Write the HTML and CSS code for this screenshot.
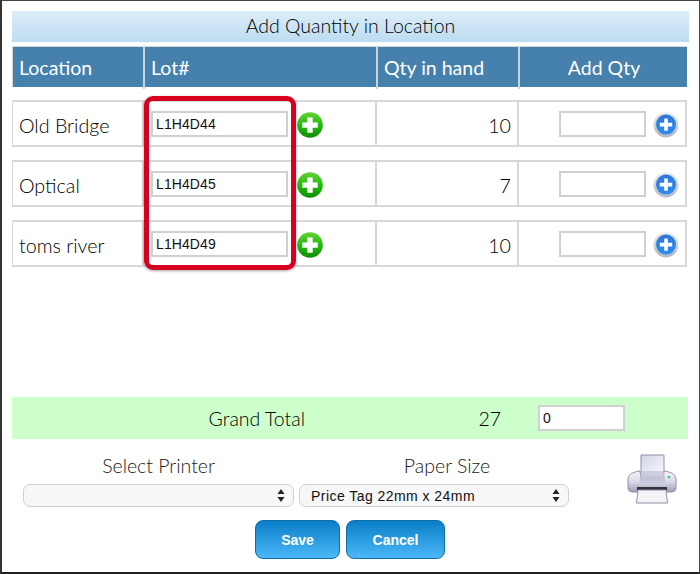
FILE: index.html
```html
<!DOCTYPE html>
<html lang="en">
<head>
<meta charset="utf-8">
<title>Add Quantity in Location</title>
<link rel="stylesheet" href="styles.css">
</head>
<body>
<svg class="defs" width="0" height="0" aria-hidden="true">
  <defs>
    <linearGradient id="greenGrad" x1="0" y1="0" x2="0" y2="1">
      <stop offset="0" stop-color="#5fd433"/><stop offset="0.55" stop-color="#22b80c"/><stop offset="1" stop-color="#0f8c08"/>
    </linearGradient>
    <linearGradient id="blueGrad" x1="0" y1="0" x2="0" y2="1">
      <stop offset="0" stop-color="#2a78d8"/><stop offset="1" stop-color="#2f8cf0"/>
    </linearGradient>
    <linearGradient id="ringGrad" x1="0" y1="0" x2="0" y2="1">
      <stop offset="0" stop-color="#e8e8ee"/><stop offset="1" stop-color="#b4b8c4"/>
    </linearGradient>
    <linearGradient id="paperGrad" x1="0" y1="0" x2="1" y2="1">
      <stop offset="0" stop-color="#d0d4e6"/><stop offset="1" stop-color="#fbfbff"/>
    </linearGradient>
    <linearGradient id="bodyGrad" x1="0" y1="0" x2="0" y2="1">
      <stop offset="0" stop-color="#f6f6fa"/><stop offset="0.55" stop-color="#d6d6e6"/><stop offset="1" stop-color="#9a9bb4"/>
    </linearGradient>
    <symbol id="addGreen" viewBox="0 0 26 26">
      <circle cx="13" cy="13" r="12.800" fill="url(#greenGrad)"/>
      <path d="M10.300 5.500h5.400v5h5v5.200h-5v5h-5.400v-5h-5v-5.200h5z" fill="#fff"/>
    </symbol>
    <symbol id="addBlue" viewBox="0 0 26 26">
      <circle cx="13" cy="13" r="12.500" fill="url(#ringGrad)"/>
      <circle cx="13" cy="12.600" r="10" fill="url(#blueGrad)"/>
      <path d="M11.200 6.500h3.600v4.300h4.400v3.600h-4.400v4.300h-3.600v-4.300h-4.400v-3.600h4.400z" fill="#fff"/>
    </symbol>
  </defs>
</svg>
<main class="frame">
  <h1 class="title">Add Quantity in Location</h1>
  <section class="table">
    <div class="grid head">
      <div class="hcell">Location</div>
      <div class="hcell">Lot#</div>
      <div class="hcell">Qty in hand</div>
      <div class="hcell center">Add Qty</div>
    </div>
    <div class="grid row">
      <div class="cell">Old Bridge</div>
      <div class="cell lot"><input class="input lot-input" value="L1H4D44"><svg class="plus"><use href="#addGreen"/></svg></div>
      <div class="cell num">10</div>
      <div class="cell add"><input class="input qty-input"><svg class="plus-blue"><use href="#addBlue"/></svg></div>
    </div>
    <div class="grid row">
      <div class="cell">Optical</div>
      <div class="cell lot"><input class="input lot-input" value="L1H4D45"><svg class="plus"><use href="#addGreen"/></svg></div>
      <div class="cell num">7</div>
      <div class="cell add"><input class="input qty-input"><svg class="plus-blue"><use href="#addBlue"/></svg></div>
    </div>
    <div class="grid row">
      <div class="cell">toms river</div>
      <div class="cell lot"><input class="input lot-input" value="L1H4D49"><svg class="plus"><use href="#addGreen"/></svg></div>
      <div class="cell num">10</div>
      <div class="cell add"><input class="input qty-input"><svg class="plus-blue"><use href="#addBlue"/></svg></div>
    </div>
    <div class="highlight"></div>
  </section>
  <section class="total">
    <div class="total-label">Grand Total</div>
    <div class="total-num">27</div>
    <input class="input total-input" value="0">
  </section>
  <section class="print">
    <div class="print-label">Select Printer</div>
    <div class="print-label paper-label">Paper Size</div>
    <svg class="printer" viewBox="0 0 50 50" aria-label="Print">
      <path d="M14 1h23v22H14z" fill="url(#paperGrad)" stroke="#8f91a3"/>
      <path d="M13 17C6 18 1.500 20 1 25v9c0 2.500 2 4 4.500 4h39c2.500 0 4.500-1.500 4.500-4v-9c-.5-5-5-7-12-8l-1 8H14z" fill="url(#bodyGrad)" stroke="#8d8ea2"/>
      <path d="M14 17h23l1.500 12h-26z" fill="#c4c4da" opacity=".8"/>
      <circle cx="42" cy="23" r="1.300" fill="#3fb89a"/>
      <path d="M10 33h30v3H10z" fill="#34343c"/>
      <path d="M11 36h28l1.500 13h-31z" fill="#f4f4f8" stroke="#8f91a3"/>
    </svg>
    <select class="sel printer-select"><option></option></select>
    <select class="sel paper-select"><option>Price Tag 22mm x 24mm</option></select>
  </section>
  <section class="actions">
    <button class="btn save">Save</button>
    <button class="btn cancel">Cancel</button>
  </section>
</main>
</body>
</html>
```
FILE: styles.css
```css
* { box-sizing: border-box; }
html, body { margin: 0; padding: 0; background: #fff; }
body { width: 700px; height: 574px; overflow: hidden; }
.defs { position: absolute; }
.frame {
  width: 700px;
  height: 574px;
  border-top: 1px solid #444;
  border-left: 2px solid #333;
  border-right: 1px solid #444;
  border-bottom: 2px solid #222;
  padding: 10px 10px 0 10px;
  font-family: Lato, "Open Sans", sans-serif;
  font-weight: 300;
  color: #000;
}
.title {
  margin: 0 0 4px;
  height: 31px;
  line-height: 29px;
  font-size: 19.500px;
  font-weight: 300;
  text-align: center;
  color: #000;
  background: linear-gradient(#dcedf8, #bddcf1);
}
.table { position: relative; width: 675px; }
.grid {
  display: grid;
  grid-template-columns: 132px 233px 142px 168px;
}
.head {
  height: 41px;
  background: #4680ad;
  margin-bottom: 13px;
  color: #fff;
  font-size: 19.500px;
  font-weight: 400;
  border-top: 1px solid #d5d5d5;
  border-left: 1px solid #d5d5d5;
}
.hcell {
  padding-left: 6px;
  line-height: 42px;
  border-right: 2px solid #c6d5e2;
}
.hcell:last-child { border-right: 0; }
.center { text-align: center; padding-left: 0; }
.row { height: 47px; margin-bottom: 13px; }
.row:last-of-type { margin-bottom: 0; }
.cell {
  display: flex;
  align-items: center;
  padding: 3px 0 0 6px;
  font-size: 19.700px;
  border-top: 2px solid #d8d8d8;
  border-bottom: 2px solid #d8d8d8;
  border-right: 2px solid #d8d8d8;
}
.cell:first-child { border-left: 1px solid #d8d8d8; }
.num { justify-content: flex-end; padding: 3px 6px 0 0; }
.lot { padding: 1px 0 0 7px; }
.add { justify-content: flex-end; padding: 1px 6px 0 0; }
.input {
  height: 26px;
  border: 2px solid #d0d0d0;
  background: #fff;
  font-family: "Liberation Sans", Arial, sans-serif;
  font-weight: 400;
  font-size: 14px;
  color: #111;
  padding: 0 3px;
  outline: 0;
  border-radius: 0;
}
.lot-input { width: 137px; letter-spacing: .1px; }
.qty-input { width: 87px; margin-left: 0; }
.plus { width: 26px; height: 26px; margin: 1px 0 0 9px; }
.plus-blue { width: 26px; height: 26px; margin: 1px 0 0 7px; }
.highlight {
  position: absolute;
  left: 132px;
  top: 50px;
  width: 152px;
  height: 174px;
  border: 5px solid #d8001f;
  border-radius: 9px;
  box-shadow: 0 1px 3px rgba(0,0,0,.35);
}
.total {
  display: grid;
  grid-template-columns: 364px 129px 1fr;
  align-items: center;
  width: 676px;
  height: 42px;
  margin-top: 130px;
  background: #ccffcc;
  font-size: 19.500px;
}
.total-label { text-align: right; padding-right: 71px; }
.total-num { text-align: right; padding-right: 4px; }
.total-input { width: 87px; margin-left: 33px; }
.print {
  display: grid;
  grid-template-columns: 271px 270px 50px;
  grid-template-rows: 36px 24px;
  column-gap: 5px;
  padding: 9px 0 0 11px;
  height: 81px;
}
.print-label { font-size: 19.500px; line-height: 36px; text-align: center; color: #1a1a1a; }
.paper-label { padding-left: 26px; }
.printer {
  width: 50px;
  height: 50px;
  grid-column: 3;
  grid-row: 1 / span 2;
  margin-left: 53px;
  margin-top: 6px;
}
.sel {
  appearance: none;
  height: 23px;
  border: 1.500px solid #d0d0d0;
  border-radius: 7px;
  background-color: #f7f7f7;
  background-image: url("data:image/svg+xml,%3Csvg xmlns='http://www.w3.org/2000/svg' width='8' height='13'%3E%3Cpath d='M4 0l3.500 5H.5zM4 13L.5 8h7z' fill='%23222'/%3E%3C/svg%3E");
  background-repeat: no-repeat;
  background-position: right 8px center;
  font-family: "Liberation Sans", Arial, sans-serif;
  font-weight: 400;
  font-size: 14px;
  letter-spacing: .45px;
  color: #111;
  padding: 0 11px;
  grid-row: 2;
}
.printer-select { grid-column: 1; }
.paper-select { grid-column: 2; }
.actions { display: flex; justify-content: center; gap: 6px; width: 676px; }
.btn {
  height: 39px;
  border: 1px solid #0d6ea8;
  border-radius: 8px;
  background: linear-gradient(#0a7ec8, #4bb8f8);
  color: #fff;
  font-family: "Liberation Sans", Arial, sans-serif;
  font-weight: 700;
  font-size: 14px;
  padding: 0;
}
.save { width: 85px; }
.cancel { width: 99px; }
```
